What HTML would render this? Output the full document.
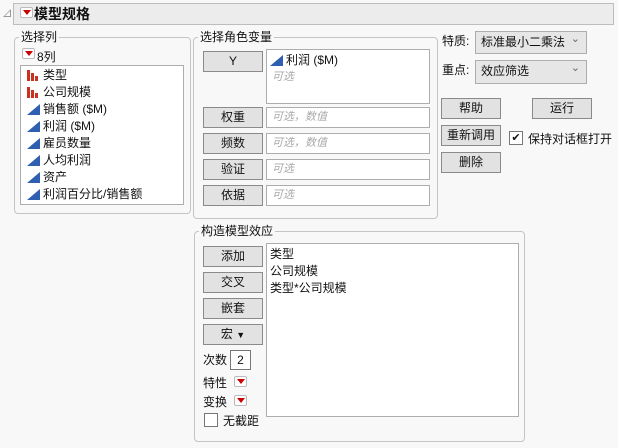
<!DOCTYPE html>
<html><head><meta charset="utf-8"><style>
*{box-sizing:border-box}
body{margin:0;width:618px;height:448px;background:#f8f8f8;font-family:"Liberation Sans","Noto Sans CJK SC",sans-serif;font-size:12px;color:#111;position:relative;overflow:hidden}
.a{position:absolute}
.grp{position:absolute;border:1px solid #c4c4c4;border-radius:4px}
.lg{position:absolute;background:#f8f8f8;padding:0 2px;font-size:12px;line-height:14px}
.btn{position:absolute;background:#e2e2e2;border:1px solid #8a8a8a;text-align:center;font-size:12px;line-height:18px}
.box{position:absolute;background:#fff;border:1px solid #adadad}
.ph{color:#aaa;font-style:italic;font-size:11px;padding-left:5px;line-height:18px}
.rd{position:absolute;width:13px;height:11px;border:1px solid #bbb;border-radius:2px;background:#fff}
.rd:after{content:"";position:absolute;left:2px;top:2px;border-left:4px solid transparent;border-right:4px solid transparent;border-top:5px solid #c00}
.it{position:absolute;left:4px;height:17px;line-height:17px;padding-left:18px;white-space:nowrap}
.bar:before{content:"";position:absolute;left:2px;top:3px;width:12px;height:11px;background:linear-gradient(90deg,#c8321e 0 3px,transparent 3px 4px,#c8321e 4px 7px,transparent 7px 8px,#c8321e 8px 11px,transparent 11px);clip-path:polygon(0 0,4px 0,4px 3px,8px 3px,8px 6px,12px 6px,12px 100%,0 100%)}
.cont:before{content:"";position:absolute;left:2px;top:3px;width:13px;height:11px;background:#2e5fb0;clip-path:polygon(100% 0,100% 100%,0 100%)}
.sel{position:absolute;background:#e6e6e6;border:1px solid #adadad;line-height:20px;padding-left:5px}
.sel:after{content:"⌄";position:absolute;right:6px;top:-3px;color:#666;font-size:11px}
</style></head><body>
<div class="a" style="left:3px;top:9px;width:0;height:0;border-left:8px solid transparent;border-bottom:8px solid #999"></div>
<div class="a" style="left:5px;top:11px;width:0;height:0;border-left:5px solid transparent;border-bottom:5px solid #f8f8f8"></div>
<div class="a" style="left:13px;top:3px;width:601px;height:22px;background:#ececec;border:1px solid #bdbdbd"></div>
<div class="rd" style="left:20px;top:7px"></div>
<div class="a" style="left:34px;top:4px;font-weight:bold;font-size:14px;line-height:20px">模型规格</div>

<div class="grp" style="left:14px;top:37px;width:177px;height:177px"></div>
<div class="lg" style="left:19px;top:30px">选择列</div>
<div class="rd" style="left:22px;top:48px"></div>
<div class="a" style="left:37px;top:50px;line-height:14px">8列</div>
<div class="box" style="left:20px;top:65px;width:164px;height:140px">
<div class="it bar" style="top:1px">类型</div>
<div class="it bar" style="top:18px">公司规模</div>
<div class="it cont" style="top:35px">销售额 ($M)</div>
<div class="it cont" style="top:52px">利润 ($M)</div>
<div class="it cont" style="top:69px">雇员数量</div>
<div class="it cont" style="top:86px">人均利润</div>
<div class="it cont" style="top:103px">资产</div>
<div class="it cont" style="top:120px">利润百分比/销售额</div>
</div>

<div class="grp" style="left:193px;top:37px;width:245px;height:182px"></div>
<div class="lg" style="left:198px;top:30px">选择角色变量</div>
<div class="btn" style="left:203px;top:51px;width:60px;height:21px">Y</div>
<div class="box" style="left:266px;top:49px;width:164px;height:55px">
<div class="it cont" style="top:2px;left:1px">利润 ($M)</div>
<div class="ph" style="position:absolute;top:18px;left:0">可选</div>
</div>
<div class="btn" style="left:203px;top:107px;width:60px;height:21px">权重</div>
<div class="box ph" style="left:266px;top:107px;width:164px;height:21px">可选，数值</div>
<div class="btn" style="left:203px;top:133px;width:60px;height:21px">频数</div>
<div class="box ph" style="left:266px;top:133px;width:164px;height:21px">可选，数值</div>
<div class="btn" style="left:203px;top:159px;width:60px;height:21px">验证</div>
<div class="box ph" style="left:266px;top:159px;width:164px;height:21px">可选</div>
<div class="btn" style="left:203px;top:185px;width:60px;height:21px">依据</div>
<div class="box ph" style="left:266px;top:185px;width:164px;height:21px">可选</div>

<div class="a" style="left:442px;top:32px">特质:</div>
<div class="sel" style="left:475px;top:31px;width:112px;height:23px">标准最小二乘法</div>
<div class="a" style="left:442px;top:61px">重点:</div>
<div class="sel" style="left:475px;top:60px;width:112px;height:24px">效应筛选</div>
<div class="btn" style="left:441px;top:98px;width:60px;height:21px">帮助</div>
<div class="btn" style="left:532px;top:98px;width:60px;height:21px">运行</div>
<div class="btn" style="left:441px;top:125px;width:60px;height:21px">重新调用</div>
<div class="a" style="left:509px;top:131px;width:14px;height:14px;background:#fff;border:1px solid #777;font-size:11px;line-height:12px;text-align:center">✔</div>
<div class="a" style="left:528px;top:130px">保持对话框打开</div>
<div class="btn" style="left:441px;top:152px;width:60px;height:21px">删除</div>

<div class="grp" style="left:194px;top:231px;width:331px;height:211px"></div>
<div class="lg" style="left:199px;top:224px">构造模型效应</div>
<div class="btn" style="left:203px;top:246px;width:60px;height:21px">添加</div>
<div class="btn" style="left:203px;top:272px;width:60px;height:21px">交叉</div>
<div class="btn" style="left:203px;top:298px;width:60px;height:21px">嵌套</div>
<div class="btn" style="left:203px;top:324px;width:60px;height:21px">宏 <span style="font-size:9px">▼</span></div>
<div class="a" style="left:203px;top:351px">次数</div>
<div class="a" style="left:230px;top:350px;width:21px;height:20px;background:#fff;border:1px solid #777;text-align:center;line-height:18px">2</div>
<div class="a" style="left:203px;top:374px">特性</div>
<div class="rd" style="left:234px;top:376px"></div>
<div class="a" style="left:203px;top:393px">变换</div>
<div class="rd" style="left:234px;top:395px"></div>
<div class="a" style="left:204px;top:413px;width:14px;height:14px;background:#fff;border:1px solid #777"></div>
<div class="a" style="left:223px;top:412px">无截距</div>
<div class="box" style="left:266px;top:243px;width:253px;height:174px;padding:2px 3px;line-height:17px">类型<br>公司规模<br>类型*公司规模</div>
</body></html>
